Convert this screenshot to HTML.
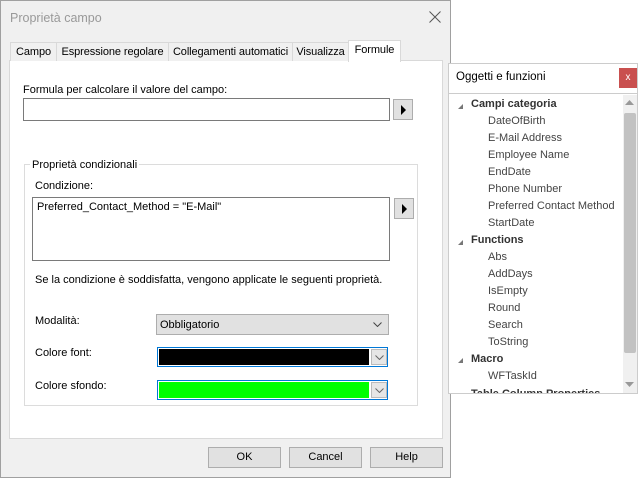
<!DOCTYPE html>
<html><head><meta charset="utf-8"><style>
*{margin:0;padding:0;box-sizing:border-box}
body{width:640px;height:479px;background:#fff;font-family:"Liberation Sans",sans-serif;font-size:11px;color:#000;position:relative;overflow:hidden}
.a{position:absolute;white-space:nowrap}
.tab{position:absolute;top:42px;height:19px;border:1px solid #d9d9d9;border-bottom:none;background:#f0f0f0;font-size:11px;text-align:center;line-height:18px;letter-spacing:-0.1px}
.btn{position:absolute;background:#e1e1e1;border:1px solid #adadad;text-align:center;line-height:19px}
.tri{width:0;height:0;border-left:5px solid #000;border-top:5px solid transparent;border-bottom:5px solid transparent;position:absolute;left:7px;top:5px}
.it{position:absolute;left:488px;color:#444;font-size:11px}
.hd{position:absolute;left:471px;color:#333;font-weight:bold;font-size:11px}
.ar{position:absolute;left:458px;width:0;height:0;border-left:5px solid transparent;border-bottom:5px solid #777}
</style></head><body>
<div class="a" style="left:0;top:0;width:451px;height:478px;background:#f0f0f0;border:1px solid #a0a0a0"></div>
<div class="a" style="left:10px;top:11px;font-size:12.5px;color:#999">Proprietà campo</div>
<svg class="a" style="left:429px;top:11px" width="12" height="12"><path d="M0.5 0.5L11.5 11.5M11.5 0.5L0.5 11.5" stroke="#555" stroke-width="1"/></svg>
<div class="a" style="left:9px;top:60px;width:434px;height:379px;background:#fff;border:1px solid #d9d9d9"></div>
<div class="tab" style="left:10px;width:47px">Campo</div>
<div class="tab" style="left:56px;width:113px">Espressione regolare</div>
<div class="tab" style="left:168px;width:125px">Collegamenti automatici</div>
<div class="tab" style="left:292px;width:57px">Visualizza</div>
<div class="tab" style="left:348px;top:40px;height:22px;width:53px;background:#fff;z-index:2">Formule</div>
<div class="a" style="left:23px;top:84px">Formula per calcolare il valore del campo:</div>
<div class="a" style="left:23px;top:98px;width:367px;height:23px;border:1px solid #7a7a7a;background:#fff"></div>
<div class="btn" style="left:393px;top:99px;width:20px;height:21px"><div class="tri"></div></div>
<div class="a" style="left:24px;top:164px;width:394px;height:242px;border:1px solid #dcdcdc"></div>
<div class="a" style="left:30px;top:159px;background:#fff;padding:0 2px">Proprietà condizionali</div>
<div class="a" style="left:35px;top:180px">Condizione:</div>
<div class="a" style="left:32px;top:197px;width:358px;height:64px;border:1px solid #7a7a7a;background:#fff"></div>
<div class="a" style="left:37px;top:201px">Preferred_Contact_Method = "E-Mail"</div>
<div class="btn" style="left:394px;top:198px;width:20px;height:21px"><div class="tri"></div></div>
<div class="a" style="left:35px;top:274px">Se la condizione è soddisfatta, vengono applicate le seguenti proprietà.</div>
<div class="a" style="left:35px;top:315px">Modalità:</div>
<div class="a" style="left:156px;top:314px;width:233px;height:21px;background:#e1e1e1;border:1px solid #adadad;padding:4px 3px;line-height:13px">Obbligatorio</div>
<svg class="a" style="left:373px;top:322px" width="9" height="5"><path d="M0.5 0.5L4.5 4.5L8.5 0.5" stroke="#444" fill="none"/></svg>
<div class="a" style="left:35px;top:347px">Colore font:</div>
<div class="a" style="left:157px;top:347px;width:231px;height:20px;border:1px solid #0078d7;background:#fff"></div>
<div class="a" style="left:159px;top:349px;width:210px;height:16px;background:#000"></div>
<div class="a" style="left:371px;top:349px;width:16px;height:16px;background:#e6e6e6;border:1px solid #bbb"></div>
<svg class="a" style="left:375px;top:355px" width="9" height="5"><path d="M0.5 0.5L4.5 4.5L8.5 0.5" stroke="#666" fill="none"/></svg>
<div class="a" style="left:35px;top:380px">Colore sfondo:</div>
<div class="a" style="left:157px;top:380px;width:231px;height:20px;border:1px solid #0078d7;background:#fff"></div>
<div class="a" style="left:159px;top:382px;width:210px;height:16px;background:#00ff00"></div>
<div class="a" style="left:371px;top:382px;width:16px;height:16px;background:#e6e6e6;border:1px solid #bbb"></div>
<svg class="a" style="left:375px;top:388px" width="9" height="5"><path d="M0.5 0.5L4.5 4.5L8.5 0.5" stroke="#666" fill="none"/></svg>
<div class="btn" style="left:208px;top:447px;width:73px;height:21px">OK</div>
<div class="btn" style="left:289px;top:447px;width:73px;height:21px">Cancel</div>
<div class="btn" style="left:370px;top:447px;width:73px;height:21px">Help</div>

<div class="a" style="left:448px;top:63px;width:190px;height:331px;background:#fff;border:1px solid #ccc"></div>
<div class="a" style="left:456px;top:71px;font-size:11.5px">Oggetti e funzioni</div>
<div class="a" style="left:619px;top:68px;width:18px;height:20px;background:#c9504f;color:#fff;font-size:10px;text-align:center;line-height:19px">x</div>
<div class="a" style="left:449px;top:93px;width:188px;height:1px;background:#ccc"></div>
<div class="a" style="left:623px;top:95px;width:14px;height:298px;background:#f0f0f0"></div>
<div class="a" style="left:624px;top:113px;width:12px;height:240px;background:#c2c2c2;border-radius:2px"></div>
<svg class="a" style="left:625px;top:100px" width="9" height="5"><path d="M0 5L4.5 0L9 5Z" fill="#999"/></svg>
<svg class="a" style="left:625px;top:382px" width="9" height="5"><path d="M0 0L4.5 5L9 0Z" fill="#999"/></svg>
<div class="ar" style="top:104px"></div><div class="hd" style="top:98px">Campi categoria</div>
<div class="it" style="top:115px">DateOfBirth</div>
<div class="it" style="top:132px">E-Mail Address</div>
<div class="it" style="top:149px">Employee Name</div>
<div class="it" style="top:166px">EndDate</div>
<div class="it" style="top:183px">Phone Number</div>
<div class="it" style="top:200px">Preferred Contact Method</div>
<div class="it" style="top:217px">StartDate</div>
<div class="ar" style="top:240px"></div><div class="hd" style="top:234px">Functions</div>
<div class="it" style="top:251px">Abs</div>
<div class="it" style="top:268px">AddDays</div>
<div class="it" style="top:285px">IsEmpty</div>
<div class="it" style="top:302px">Round</div>
<div class="it" style="top:319px">Search</div>
<div class="it" style="top:336px">ToString</div>
<div class="ar" style="top:358px"></div><div class="hd" style="top:353px">Macro</div>
<div class="it" style="top:370px">WFTaskId</div>
<div class="a" style="left:449px;top:386px;width:174px;height:7px;overflow:hidden"><div class="hd" style="left:22px;top:2px">Table Column Properties</div></div>
</body></html>
